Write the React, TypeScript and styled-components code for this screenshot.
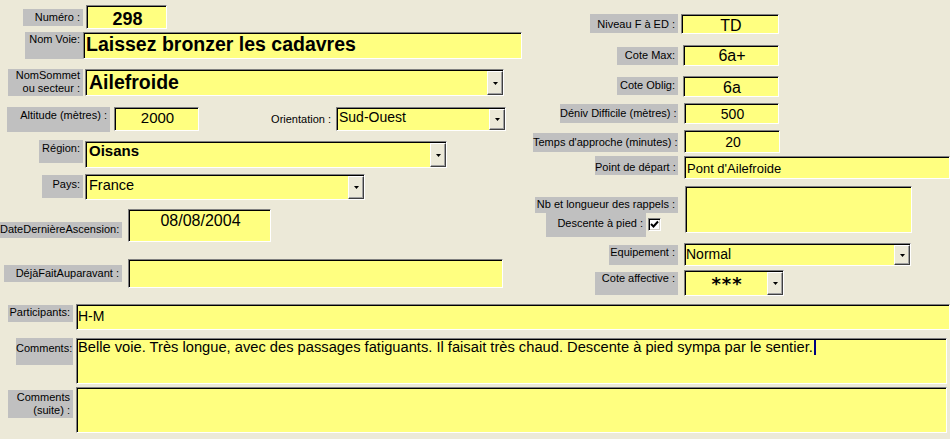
import React from "react";
import styled, { createGlobalStyle } from "styled-components";

const GlobalStyle = createGlobalStyle`
  html, body {
    margin: 0;
    padding: 0;
    background: #ece9d8;
  }
`;

const Form = styled.div`
  width: 950px;
  height: 439px;
  overflow: hidden;
  background: #ece9d8;
  display: grid;
  grid-template-columns: 525px 425px;
  grid-template-rows: 304px 135px;
  font-family: "Liberation Sans", Arial, sans-serif;
  color: #000;
`;

const Column = styled.div`
  display: flex;
  flex-direction: column;
`;

const Bottom = styled.div`
  grid-column: 1 / -1;
  display: flex;
  flex-direction: column;
`;

const Row = styled.div<{ $mt: number }>`
  display: flex;
  align-items: flex-start;
  margin-top: ${(p) => p.$mt}px;
`;

const Label = styled.div<{
  $ml: number;
  $w: number;
  $h: number;
  $mt?: number;
  $pt?: number;
  $plain?: boolean;
}>`
  flex: none;
  box-sizing: border-box;
  margin-left: ${(p) => p.$ml}px;
  margin-top: ${(p) => p.$mt ?? 0}px;
  width: ${(p) => p.$w}px;
  height: ${(p) => p.$h}px;
  padding: ${(p) => p.$pt ?? 2}px 3px 0 0;
  background: ${(p) => (p.$plain ? "transparent" : "#c0c0c0")};
  text-align: right;
  font-size: 11px;
  line-height: 13px;
  white-space: nowrap;
`;

const Field = styled.div<{
  $ml: number;
  $w: number;
  $h: number;
  $mt?: number;
}>`
  flex: none;
  display: flex;
  box-sizing: border-box;
  margin-left: ${(p) => p.$ml}px;
  margin-top: ${(p) => p.$mt ?? 0}px;
  width: ${(p) => p.$w}px;
  height: ${(p) => p.$h}px;
  background: #ffff80;
  border-top: 1px solid #808080;
  border-left: 1px solid #808080;
  border-right: 1px solid #ffffff;
  border-bottom: 1px solid #ffffff;
  box-shadow: inset 1px 1px 0 #000;
  overflow: hidden;
`;

const Value = styled.div<{
  $fs?: number;
  $lh?: number;
  $bold?: boolean;
  $center?: boolean;
  $pt?: number;
  $pl?: number;
}>`
  flex: 1;
  min-width: 0;
  padding-top: ${(p) => p.$pt ?? 0}px;
  padding-left: ${(p) => p.$pl ?? 2}px;
  font-size: ${(p) => p.$fs ?? 14}px;
  line-height: ${(p) => p.$lh ?? 17}px;
  font-weight: ${(p) => (p.$bold ? 700 : 400)};
  text-align: ${(p) => (p.$center ? "center" : "left")};
  white-space: nowrap;
`;

const Stars = styled(Value)`
  font-family: "DejaVu Sans", sans-serif;
  font-weight: 700;
  letter-spacing: 1px;
`;

const DropButton = styled.div`
  flex: none;
  width: 16px;
  box-sizing: border-box;
  margin: 1px 0 0 0;
  background: #ece9d8;
  border-top: 1px solid #ffffff;
  border-left: 1px solid #ffffff;
  border-right: 1px solid #404040;
  border-bottom: 1px solid #404040;
  box-shadow: inset -1px -1px 0 #a0a0a0;
  display: flex;
  align-items: center;
  justify-content: center;
`;

const Caret = styled.span`
  display: inline-block;
  width: 2px;
  height: 15px;
  margin-left: 1px;
  background: #000080;
  vertical-align: -3px;
`;

const LabelStack = styled.div`
  flex: none;
  width: 153px;
  display: flex;
  flex-direction: column;
`;

const InlineGroup = styled.div`
  display: flex;
  align-items: flex-start;
`;

const CheckBox = styled.div`
  flex: none;
  margin: 5px 0 0 2px;
  width: 13px;
  height: 13px;
  box-sizing: border-box;
  background: #ffffff;
  border-top: 1px solid #808080;
  border-left: 1px solid #808080;
  border-right: 1px solid #ffffff;
  border-bottom: 1px solid #ffffff;
  box-shadow: inset 1px 1px 0 #000, inset -1px -1px 0 #d4d0c8;
  display: flex;
  align-items: center;
  justify-content: center;
`;

const Arrow = () => (
  <svg width="5" height="3" viewBox="0 0 5 3">
    <polygon points="0,0 5,0 2.5,3" fill="#000" />
  </svg>
);

const Check = () => (
  <svg width="9" height="9" viewBox="0 0 9 9">
    <path d="M1 4 L3.5 6.5 L8 1.5" stroke="#000" strokeWidth="2" fill="none" />
  </svg>
);

export default function App() {
  return (
    <>
      <GlobalStyle />
      <Form>
        <Column>
          <Row $mt={5}>
            <Label $ml={23} $w={60} $h={17} $mt={4} $pt={2}>
              Numéro :
            </Label>
            <Field $ml={3} $w={81} $h={24}>
              <Value $fs={18} $lh={21} $bold $center $pt={3}>
                298
              </Value>
            </Field>
          </Row>

          <Row $mt={3}>
            <Label $ml={25} $w={58} $h={27} $pt={1}>
              Nom Voie:
            </Label>
            <Field $ml={0} $w={439} $h={27}>
              <Value $fs={19.5} $lh={22} $bold $pt={0} $pl={2}>
                Laissez bronzer les cadavres
              </Value>
            </Field>
          </Row>

          <Row $mt={10}>
            <Label $ml={8} $w={75} $h={27} $pt={0}>
              NomSommet
              <br />
              ou secteur :
            </Label>
            <Field $ml={2} $w={419} $h={27}>
              <Value $fs={19.5} $lh={22} $bold $pt={1} $pl={3}>
                Ailefroide
              </Value>
              <DropButton>
                <Arrow />
              </DropButton>
            </Field>
          </Row>

          <Row $mt={11}>
            <Label $ml={7} $w={103} $h={25} $pt={2}>
              Altitude (mètres) :
            </Label>
            <Field $ml={4} $w={85} $h={24}>
              <Value $fs={15} $lh={18} $center $pt={1}>
                2000
              </Value>
            </Field>
            <Label $ml={63} $w={72} $h={17} $mt={4} $pt={2} $plain>
              Orientation :
            </Label>
            <Field $ml={2} $w={170} $h={24}>
              <Value $pt={1} $pl={2}>
                Sud-Ouest
              </Value>
              <DropButton>
                <Arrow />
              </DropButton>
            </Field>
          </Row>

          <Row $mt={8}>
            <Label $ml={39} $w={44} $h={23} $pt={2}>
              Région:
            </Label>
            <Field $ml={2} $mt={1} $w={362} $h={27}>
              <Value $fs={15} $lh={18} $bold $pt={0} $pl={3}>
                Oisans
              </Value>
              <DropButton>
                <Arrow />
              </DropButton>
            </Field>
          </Row>

          <Row $mt={6}>
            <Label $ml={42} $w={41} $h={23} $mt={1} $pt={3}>
              Pays:
            </Label>
            <Field $ml={2} $w={280} $h={26}>
              <Value $fs={14.5} $pt={2} $pl={3}>
                France
              </Value>
              <DropButton>
                <Arrow />
              </DropButton>
            </Field>
          </Row>

          <Row $mt={9}>
            <Label $ml={0} $w={122} $h={16} $mt={13} $pt={1}>
              DateDernièreAscension:
            </Label>
            <Field $ml={6} $w={143} $h={33}>
              <Value $fs={16} $lh={19} $center $pt={1}>
                08/08/2004
              </Value>
            </Field>
          </Row>

          <Row $mt={17}>
            <Label $ml={4} $w={118} $h={17} $mt={6} $pt={2}>
              DéjàFaitAuparavant :
            </Label>
            <Field $ml={6} $w={375} $h={29}>
              <Value />
            </Field>
          </Row>
        </Column>

        <Column>
          <Row $mt={14}>
            <Label $ml={65} $w={88} $h={19} $pt={4}>
              Niveau F à ED :
            </Label>
            <Field $ml={3} $w={98} $h={20}>
              <Value $fs={16} $lh={17} $center $pt={2}>
                TD
              </Value>
            </Field>
          </Row>

          <Row $mt={11}>
            <Label $ml={92} $w={61} $h={18} $mt={2} $pt={2}>
              Cote Max:
            </Label>
            <Field $ml={5} $w={96} $h={21}>
              <Value $fs={16} $lh={19} $center $pt={0}>
                6a+
              </Value>
            </Field>
          </Row>

          <Row $mt={10}>
            <Label $ml={92} $w={61} $h={18} $mt={1} $pt={2}>
              Cote Oblig:
            </Label>
            <Field $ml={5} $w={96} $h={21}>
              <Value $fs={16} $lh={19} $center $pt={1}>
                6a
              </Value>
            </Field>
          </Row>

          <Row $mt={6}>
            <Label $ml={35} $w={118} $h={19} $mt={1} $pt={3}>
              Déniv Difficile (mètres) :
            </Label>
            <Field $ml={6} $w={95} $h={21}>
              <Value $center $pt={2}>
                500
              </Value>
            </Field>
          </Row>

          <Row $mt={6}>
            <Label $ml={8} $w={145} $h={19} $mt={3} $pt={3}>
              Temps d'approche (minutes) :
            </Label>
            <Field $ml={6} $w={96} $h={23}>
              <Value $center $pt={3}>
                20
              </Value>
            </Field>
          </Row>

          <Row $mt={3}>
            <Label $ml={70} $w={83} $h={19} $pt={5}>
              Point de départ :
            </Label>
            <Field $ml={6} $w={266} $h={23}>
              <Value $fs={13} $lh={16} $pt={4} $pl={2}>
                Pont d'Ailefroide
              </Value>
            </Field>
          </Row>

          <Row $mt={7}>
            <LabelStack>
              <Label $ml={10} $w={143} $h={16} $mt={11} $pt={1}>
                Nb et longueur des rappels :
              </Label>
              <InlineGroup>
                <Label $ml={21} $w={100} $h={24} $pt={4}>
                  Descente à pied :
                </Label>
                <CheckBox>
                  <Check />
                </CheckBox>
              </InlineGroup>
            </LabelStack>
            <Field $ml={7} $w={227} $h={47}>
              <Value />
            </Field>
          </Row>

          <Row $mt={6}>
            <Label $ml={84} $w={69} $h={20} $mt={2} $pt={1}>
              Equipement :
            </Label>
            <Field $ml={6} $w={227} $h={23}>
              <Value $pt={2} $pl={1}>
                Normal
              </Value>
              <DropButton>
                <Arrow />
              </DropButton>
            </Field>
          </Row>

          <Row $mt={4}>
            <Label $ml={70} $w={83} $h={23} $mt={2} $pt={0}>
              Cote affective :
            </Label>
            <Field $ml={6} $w={100} $h={26}>
              <Stars $fs={18} $lh={21} $center $pt={2}>
                ***
              </Stars>
              <DropButton>
                <Arrow />
              </DropButton>
            </Field>
          </Row>
        </Column>

        <Bottom>
          <Row $mt={0}>
            <Label $ml={8} $w={65} $h={17} $mt={1} $pt={1}>
              Participants:
            </Label>
            <Field $ml={3} $w={874} $h={26}>
              <Value $pt={3} $pl={1}>
                H-M
              </Value>
            </Field>
          </Row>

          <Row $mt={8}>
            <Label $ml={16} $w={57} $h={27} $pt={4}>
              Comments:
            </Label>
            <Field $ml={3} $w={871} $h={46}>
              <Value $fs={14.7} $pt={0} $pl={1}>
                Belle voie. Très longue, avec des passages fatiguants. Il faisait très chaud. Descente à pied
                sympa par le sentier.
                <Caret />
              </Value>
            </Field>
          </Row>

          <Row $mt={3}>
            <Label $ml={8} $w={65} $h={28} $mt={3} $pt={1}>
              Comments
              <br />
              (suite) :
            </Label>
            <Field $ml={3} $w={871} $h={46}>
              <Value />
            </Field>
          </Row>
        </Bottom>
      </Form>
    </>
  );
}
